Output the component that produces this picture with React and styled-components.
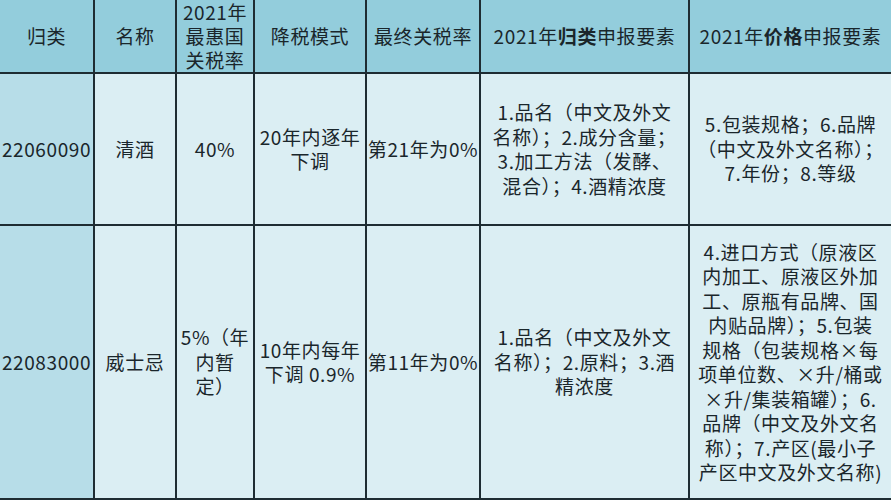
import React from 'react';
import styled, { createGlobalStyle } from 'styled-components';

const GlobalStyle = createGlobalStyle`
  html, body {
    margin: 0;
    padding: 0;
    background: #ffffff;
  }
  body {
    font-family: "Noto Sans CJK SC", "Noto Sans", sans-serif;
    color: #1a262b;
  }
`;

const Table = styled.div`
  display: grid;
  grid-template-columns: 93px 80px 76px 110px 112px 207px 201px;
  grid-template-rows: 72px 150px 272px;
  gap: 2px;
  width: 891px;
  padding-bottom: 2px;
  background: #1e2c32;
`;

const Cell = styled.div`
  display: flex;
  flex-direction: column;
  align-items: center;
  justify-content: center;
  text-align: center;
  font-size: 19px;
  line-height: ${p => (p.$kind === 'head' ? '24px' : '24.5px')};
  letter-spacing: 0.6px;
  white-space: nowrap;
  overflow: hidden;
  background: ${p => (p.$kind === 'head' ? '#93cddc' : p.$kind === 'code' ? '#b7dde8' : '#dbeef3')};
`;

const Line = styled.span`
  display: block;
`;

const Strong = styled.b`
  font-weight: 700;
`;

const header = [
  ['归类'],
  ['名称'],
  ['2021年', '最惠国', '关税率'],
  ['降税模式'],
  ['最终关税率'],
  [<>2021年<Strong>归类</Strong>申报要素</>],
  [<>2021年<Strong>价格</Strong>申报要素</>],
];

const rows = [
  [
    ['22060090'],
    ['清酒'],
    ['40%'],
    ['20年内逐年', '下调'],
    ['第21年为0%'],
    ['1.品名（中文及外文', '名称）；2.成分含量；', '3.加工方法（发酵、', '混合）；4.酒精浓度'],
    ['5.包装规格；6.品牌', '（中文及外文名称）；', '7.年份；8.等级'],
  ],
  [
    ['22083000'],
    ['威士忌'],
    ['5%（年', '内暂', '定）'],
    ['10年内每年', '下调 0.9%'],
    ['第11年为0%'],
    ['1.品名（中文及外文', '名称）；2.原料；3.酒', '精浓度'],
    [
      '4.进口方式（原液区',
      '内加工、原液区外加',
      '工、原瓶有品牌、国',
      '内贴品牌）；5.包装',
      '规格（包装规格×每',
      '项单位数、×升/桶或',
      '×升/集装箱罐）；6.',
      '品牌（中文及外文名',
      '称）；7.产区(最小子',
      '产区中文及外文名称)',
    ],
  ],
];

const renderLines = lines => lines.map((l, i) => <Line key={i}>{l}</Line>);

export default function App() {
  return (
    <>
      <GlobalStyle />
      <Table>
        {header.map((lines, i) => (
          <Cell key={`h${i}`} $kind="head">{renderLines(lines)}</Cell>
        ))}
        {rows.map((row, r) =>
          row.map((lines, c) => (
            <Cell key={`${r}-${c}`} $kind={c === 0 ? 'code' : 'body'}>
              {renderLines(lines)}
            </Cell>
          ))
        )}
      </Table>
    </>
  );
}
